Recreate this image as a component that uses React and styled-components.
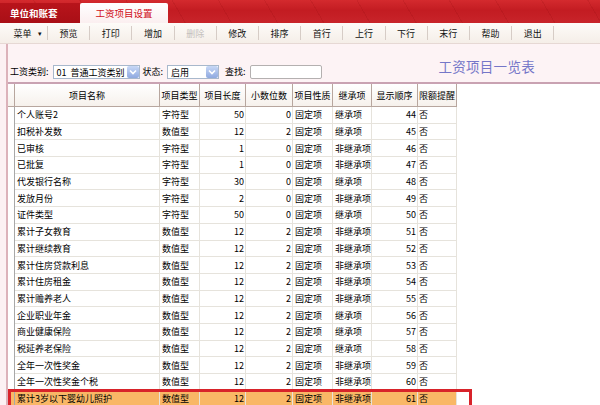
import React from 'react';
import styled, { createGlobalStyle } from 'styled-components';

const GlobalStyle = createGlobalStyle`
  html, body {
    margin: 0;
    padding: 0;
    width: 600px;
    height: 405px;
    overflow: hidden;
    background: #fcf1f3;
    font-family: "Noto Sans CJK SC", "Noto Sans", sans-serif;
    font-size: 9px;
    color: #000;
  }
`;

const columns = '7px 145px 40px 46px 47px 40px 39px 46px 39px';

const headers = ['项目名称', '项目类型', '项目长度', '小数位数', '项目性质', '继承项', '显示顺序', '限额提醒'];

const rows = [
  ['个人账号2', '字符型', 50, 0, '固定项', '继承项', 44],
  ['扣税补发数', '数值型', 12, 2, '固定项', '继承项', 45],
  ['已审核', '字符型', 1, 0, '固定项', '非继承项', 46],
  ['已批复', '字符型', 1, 0, '固定项', '非继承项', 47],
  ['代发银行名称', '字符型', 30, 0, '固定项', '继承项', 48],
  ['发放月份', '字符型', 2, 0, '固定项', '非继承项', 49],
  ['证件类型', '字符型', 50, 0, '固定项', '继承项', 50],
  ['累计子女教育', '数值型', 12, 2, '固定项', '非继承项', 51],
  ['累计继续教育', '数值型', 12, 2, '固定项', '非继承项', 52],
  ['累计住房贷款利息', '数值型', 12, 2, '固定项', '非继承项', 53],
  ['累计住房租金', '数值型', 12, 2, '固定项', '非继承项', 54],
  ['累计赡养老人', '数值型', 12, 2, '固定项', '非继承项', 55],
  ['企业职业年金', '数值型', 12, 2, '固定项', '继承项', 56],
  ['商业健康保险', '数值型', 12, 2, '固定项', '继承项', 57],
  ['税延养老保险', '数值型', 12, 2, '固定项', '继承项', 58],
  ['全年一次性奖金', '数值型', 12, 2, '固定项', '非继承项', 59],
  ['全年一次性奖金个税', '数值型', 12, 2, '固定项', '非继承项', 60],
  ['累计3岁以下婴幼儿照护', '数值型', 12, 2, '固定项', '非继承项', 61],
];

const tools = ['预览', '打印', '增加', '删除', '修改', '排序', '首行', '上行', '下行', '末行', '帮助', '退出'];

const DropArrow = () => (
  <DropBtn>
    <svg width="8" height="6" viewBox="0 0 8 6">
      <path d="M1 1.5 L4 4.5 L7 1.5" fill="none" stroke="#fff" strokeWidth="1.6" />
    </svg>
  </DropBtn>
);

const App = () => {
  return (
    <Page>
      <GlobalStyle />
      <TabBar>
        <BrandTab>单位和账套</BrandTab>
        <ActiveTab>工资项目设置</ActiveTab>
      </TabBar>
      <Toolbar>
        <ToolButton $wide>菜单 <small>▾</small></ToolButton>
        {tools.map((t) => (
          <ToolButton key={t} $disabled={t === '删除'}>{t}</ToolButton>
        ))}
      </Toolbar>
      <Content>
        <FilterBar>
          <Label>工资类别:</Label>
          <Select $width={87}>
            <span>01&nbsp; 普通工资类别</span>
            <DropArrow />
          </Select>
          <Label>状态:</Label>
          <Select $width={52}>
            <span>启用</span>
            <DropArrow />
          </Select>
          <Label $gap={6}>查找:</Label>
          <SearchInput />
          <Title>工资项目一览表</Title>
        </FilterBar>
        <Grid>
          <HeaderRow>
            <HeadCell />
            {headers.map((h) => (
              <HeadCell key={h}>{h}</HeadCell>
            ))}
          </HeaderRow>
          {rows.map((r, i) => (
            <Row key={r[0]} $selected={i === rows.length - 1}>
              <Indicator />
              <Cell>{r[0]}</Cell>
              <Cell>{r[1]}</Cell>
              <Cell $right>{r[2]}</Cell>
              <Cell $right>{r[3]}</Cell>
              <Cell>{r[4]}</Cell>
              <Cell>{r[5]}</Cell>
              <Cell $right>{r[6]}</Cell>
              <Cell $tight>否</Cell>
            </Row>
          ))}
        </Grid>
      </Content>
    </Page>
  );
};

export default App;

const Page = styled.div`
  width: 600px;
  height: 405px;
  display: flex;
  flex-direction: column;
  overflow: hidden;
`;

const TabBar = styled.div`
  height: 23px;
  flex: none;
  display: flex;
  align-items: flex-end;
  background:
    repeating-linear-gradient(60deg, rgba(120, 0, 0, 0.12) 0 1px, transparent 1px 40px),
    linear-gradient(#d42a2e, #c31c22 45%, #c8242a);
`;

const BrandTab = styled.div`
  width: 80px;
  height: 20px;
  padding-left: 10px;
  box-sizing: border-box;
  display: flex;
  align-items: center;
  color: #fff;
  font-weight: bold;
  font-size: 9.5px;
  background: linear-gradient(#b8141b, #a90f16);
`;

const ActiveTab = styled.div`
  width: 88px;
  height: 20px;
  display: flex;
  align-items: center;
  justify-content: center;
  color: #d0101a;
  font-size: 9.5px;
  background: linear-gradient(#ffffff, #fbeff0);
  border-radius: 2px 2px 0 0;
`;

const Toolbar = styled.div`
  height: 20px;
  flex: none;
  display: flex;
  align-items: center;
  padding-left: 8px;
  background: linear-gradient(#fdfbf8, #f5eee8);
  border-bottom: 1px solid #e6d8d4;
`;

const ToolButton = styled.div`
  width: ${(p) => (p.$wide ? '40px' : '42.2px')};
  height: 14px;
  display: flex;
  align-items: center;
  justify-content: center;
  gap: 6px;
  color: ${(p) => (p.$disabled ? '#c4c0bc' : '#111')};
  border-right: 1px solid #d6ccc6;
  box-sizing: border-box;
  small {
    font-size: 7px;
  }
`;

const Content = styled.div`
  flex: 1;
  display: flex;
  flex-direction: column;
  margin-left: 6px;
  border-left: 2px solid #dcb2ba;
`;

const FilterBar = styled.div`
  height: 38px;
  flex: none;
  display: flex;
  align-items: flex-end;
  padding: 0 0 3px 2px;
  box-sizing: border-box;
  background: #fdf3f5;
`;

const Label = styled.span`
  margin-left: ${(p) => (p.$gap ? `${p.$gap}px` : '3px')};
  margin-right: 4px;
  line-height: 14px;
  &:first-child {
    margin-left: 0;
  }
`;

const Select = styled.div`
  width: ${(p) => p.$width}px;
  height: 14px;
  box-sizing: border-box;
  display: flex;
  align-items: center;
  justify-content: space-between;
  padding-left: 3px;
  background: #fff;
  border: 1px solid #a8b8cc;
`;

const DropBtn = styled.span`
  width: 12px;
  height: 12px;
  display: flex;
  align-items: center;
  justify-content: center;
  border-radius: 2px;
  background: linear-gradient(#c8d8f6, #8fa9e0);
`;

const SearchInput = styled.div`
  width: 72px;
  height: 14px;
  box-sizing: border-box;
  background: #fff;
  border: 1px solid #b4b0b0;
  border-radius: 2px;
`;

const Title = styled.div`
  align-self: flex-start;
  margin: 12px 65px 0 auto;
  font-size: 13.5px;
  letter-spacing: 0.3px;
  color: #7577c8;
`;

const Grid = styled.div`
  flex: 1;
  background: #fff;
  border-top: 2px solid #c9a2b2;
`;

const HeaderRow = styled.div`
  display: grid;
  grid-template-columns: ${columns};
  width: max-content;
  height: 23px;
`;

const HeadCell = styled.div`
  display: flex;
  align-items: center;
  justify-content: center;
  white-space: nowrap;
  background: linear-gradient(#ffffff, #f6f1ec);
  border-right: 1px solid #b7a69e;
  border-bottom: 1px solid #b7a69e;
`;

const Row = styled.div`
  position: relative;
  display: grid;
  grid-template-columns: ${columns};
  width: max-content;
  height: ${(p) => (p.$selected ? '17px' : '16.7px')};
  background: ${(p) => (p.$selected ? '#f9b766' : '#fff')};
  &::after {
    content: '';
    display: ${(p) => (p.$selected ? 'block' : 'none')};
    position: absolute;
    left: 0;
    top: -2px;
    width: 464px;
    height: 24px;
    box-sizing: border-box;
    border: 3px solid #d8232a;
  }
`;

const Indicator = styled.div`
  border-right: 1px solid #a8a8a8;
`;

const Cell = styled.div`
  display: flex;
  align-items: center;
  justify-content: ${(p) => (p.$right ? 'flex-end' : 'flex-start')};
  padding: 0 ${(p) => (p.$right ? '1px' : '0')} 0 ${(p) => (p.$right ? '0' : p.$tight ? '1px' : '2px')};
  white-space: nowrap;
  overflow: hidden;
  border-right: 1px solid #e6e3dc;
  border-bottom: 1px solid #e6e3dc;
`;
